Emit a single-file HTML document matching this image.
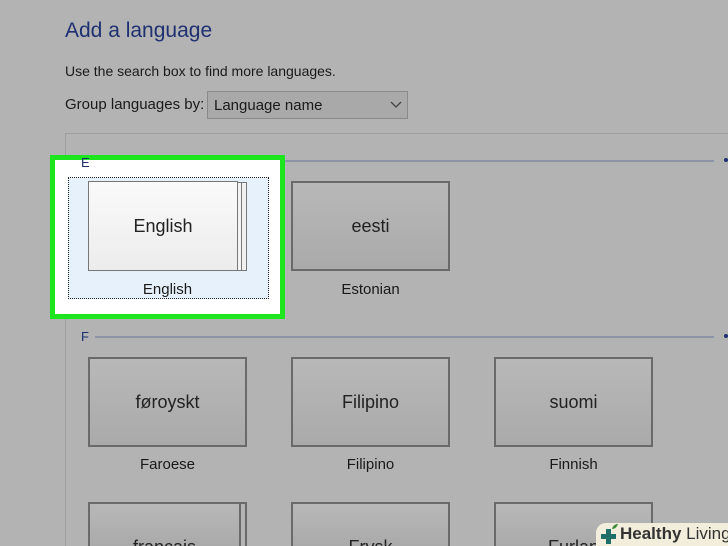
<!DOCTYPE html>
<html style="width:728px;height:546px;overflow:hidden"><head><meta charset="utf-8"><style>
*{margin:0;padding:0;box-sizing:border-box}
body{width:728px;height:546px;overflow:hidden;background:#b3b3b3;font-family:"Liberation Sans",sans-serif;position:relative;color:#1a1a1a}
.a{position:absolute;white-space:nowrap}
.tile{position:absolute;width:159px;height:90px;border:2px solid #6a6a6a;background:linear-gradient(#b8b8b8,#aaaaaa);font-size:18px;display:flex;align-items:center;justify-content:center;color:#222}
.bt{align-items:flex-start;padding-top:33px;height:44px;border-bottom:none;overflow:hidden}
.lbl{position:absolute;width:159px;text-align:center;font-size:15px;color:#1a1a1a}
.hd{position:absolute;height:2px;background:#8c94a8;left:95px;width:619px}
.sec{position:absolute;left:81px;font-size:13px;color:#1e2f6e}
.dot{position:absolute;left:724px;width:4px;height:4px;background:#1e2f6e;border-radius:2px}
</style></head><body>
<div class="a" style="left:65px;top:19px;font-size:21px;color:#1e3070">Add a language</div>
<div class="a" style="left:65px;top:63px;font-size:14px">Use the search box to find more languages.</div>
<div class="a" style="left:65px;top:96px;font-size:15px">Group languages by:</div>
<div class="a" style="left:207px;top:91px;width:201px;height:28px;border:1px solid #8a8a8a;background:#a9a9a9;font-size:15px;padding:5px 0 0 6px">Language name</div>
<svg class="a" style="left:390px;top:99px" width="12" height="10" viewBox="0 0 12 10"><path d="M1 3l5 5 5-5" fill="none" stroke="#444" stroke-width="1.3"/></svg>
<div class="a" style="left:65px;top:133px;width:663px;height:413px;border-top:1px solid #9e9e9e;border-left:1px solid #9e9e9e"></div>

<div class="hd" style="top:160px"></div><div class="dot" style="top:158px"></div>
<div class="hd" style="top:336px"></div><div class="dot" style="top:334px"></div>
<div class="sec" style="top:329px">F</div>

<div class="a" style="left:50px;top:155px;width:235px;height:164px;border:5px solid #1ee61e;background:#fff"></div>
<div class="sec" style="top:155px;left:81px">E</div>
<div class="a" style="left:68px;top:177px;width:201px;height:122px;border:1px dotted #222;background:#e6f1fb"></div>
<div class="a" style="left:236px;top:182px;width:11px;height:89px;border:1px solid #777;background:#f0f0f0"></div>
<div class="a" style="left:233px;top:182px;width:9px;height:89px;border:1px solid #777;background:#f4f4f4"></div>
<div class="tile" style="left:88px;top:181px;width:150px;background:linear-gradient(#fafafa,#ececec);border:1px solid #777">English</div>
<div class="lbl" style="left:88px;top:281px">English</div>

<div class="tile" style="left:291px;top:181px">eesti</div>
<div class="lbl" style="left:291px;top:281px">Estonian</div>

<div class="tile" style="left:88px;top:357px">føroyskt</div>
<div class="lbl" style="left:88px;top:456px">Faroese</div>
<div class="tile" style="left:291px;top:357px">Filipino</div>
<div class="lbl" style="left:291px;top:456px">Filipino</div>
<div class="tile" style="left:494px;top:357px">suomi</div>
<div class="lbl" style="left:494px;top:456px">Finnish</div>

<div class="a" style="left:236px;top:502px;width:11px;height:44px;border:2px solid #6a6a6a;border-bottom:none"></div>
<div class="tile bt" style="left:88px;top:502px;width:153px">français</div>
<div class="tile bt" style="left:291px;top:502px">Frysk</div>
<div class="tile bt" style="left:494px;top:502px">Furlan</div>

<div class="a" style="left:596px;top:523px;width:132px;height:23px;background:#f3eedc;border-radius:10px 0 0 0"></div>
<svg class="a" style="left:598px;top:523px" width="24" height="23" viewBox="0 0 24 23"><path d="M8 6h5v5h5v5h-5v5H8v-5H3v-5h5z" fill="#1e6e6a"/><path d="M14 6c1-4 4-5 6-5-1 3-3 5-6 5z" fill="#3d8a3a"/></svg>
<div class="a" style="left:620px;top:524px;font-size:17px;color:#333"><b>Healthy</b> Living</div>
</body></html>
